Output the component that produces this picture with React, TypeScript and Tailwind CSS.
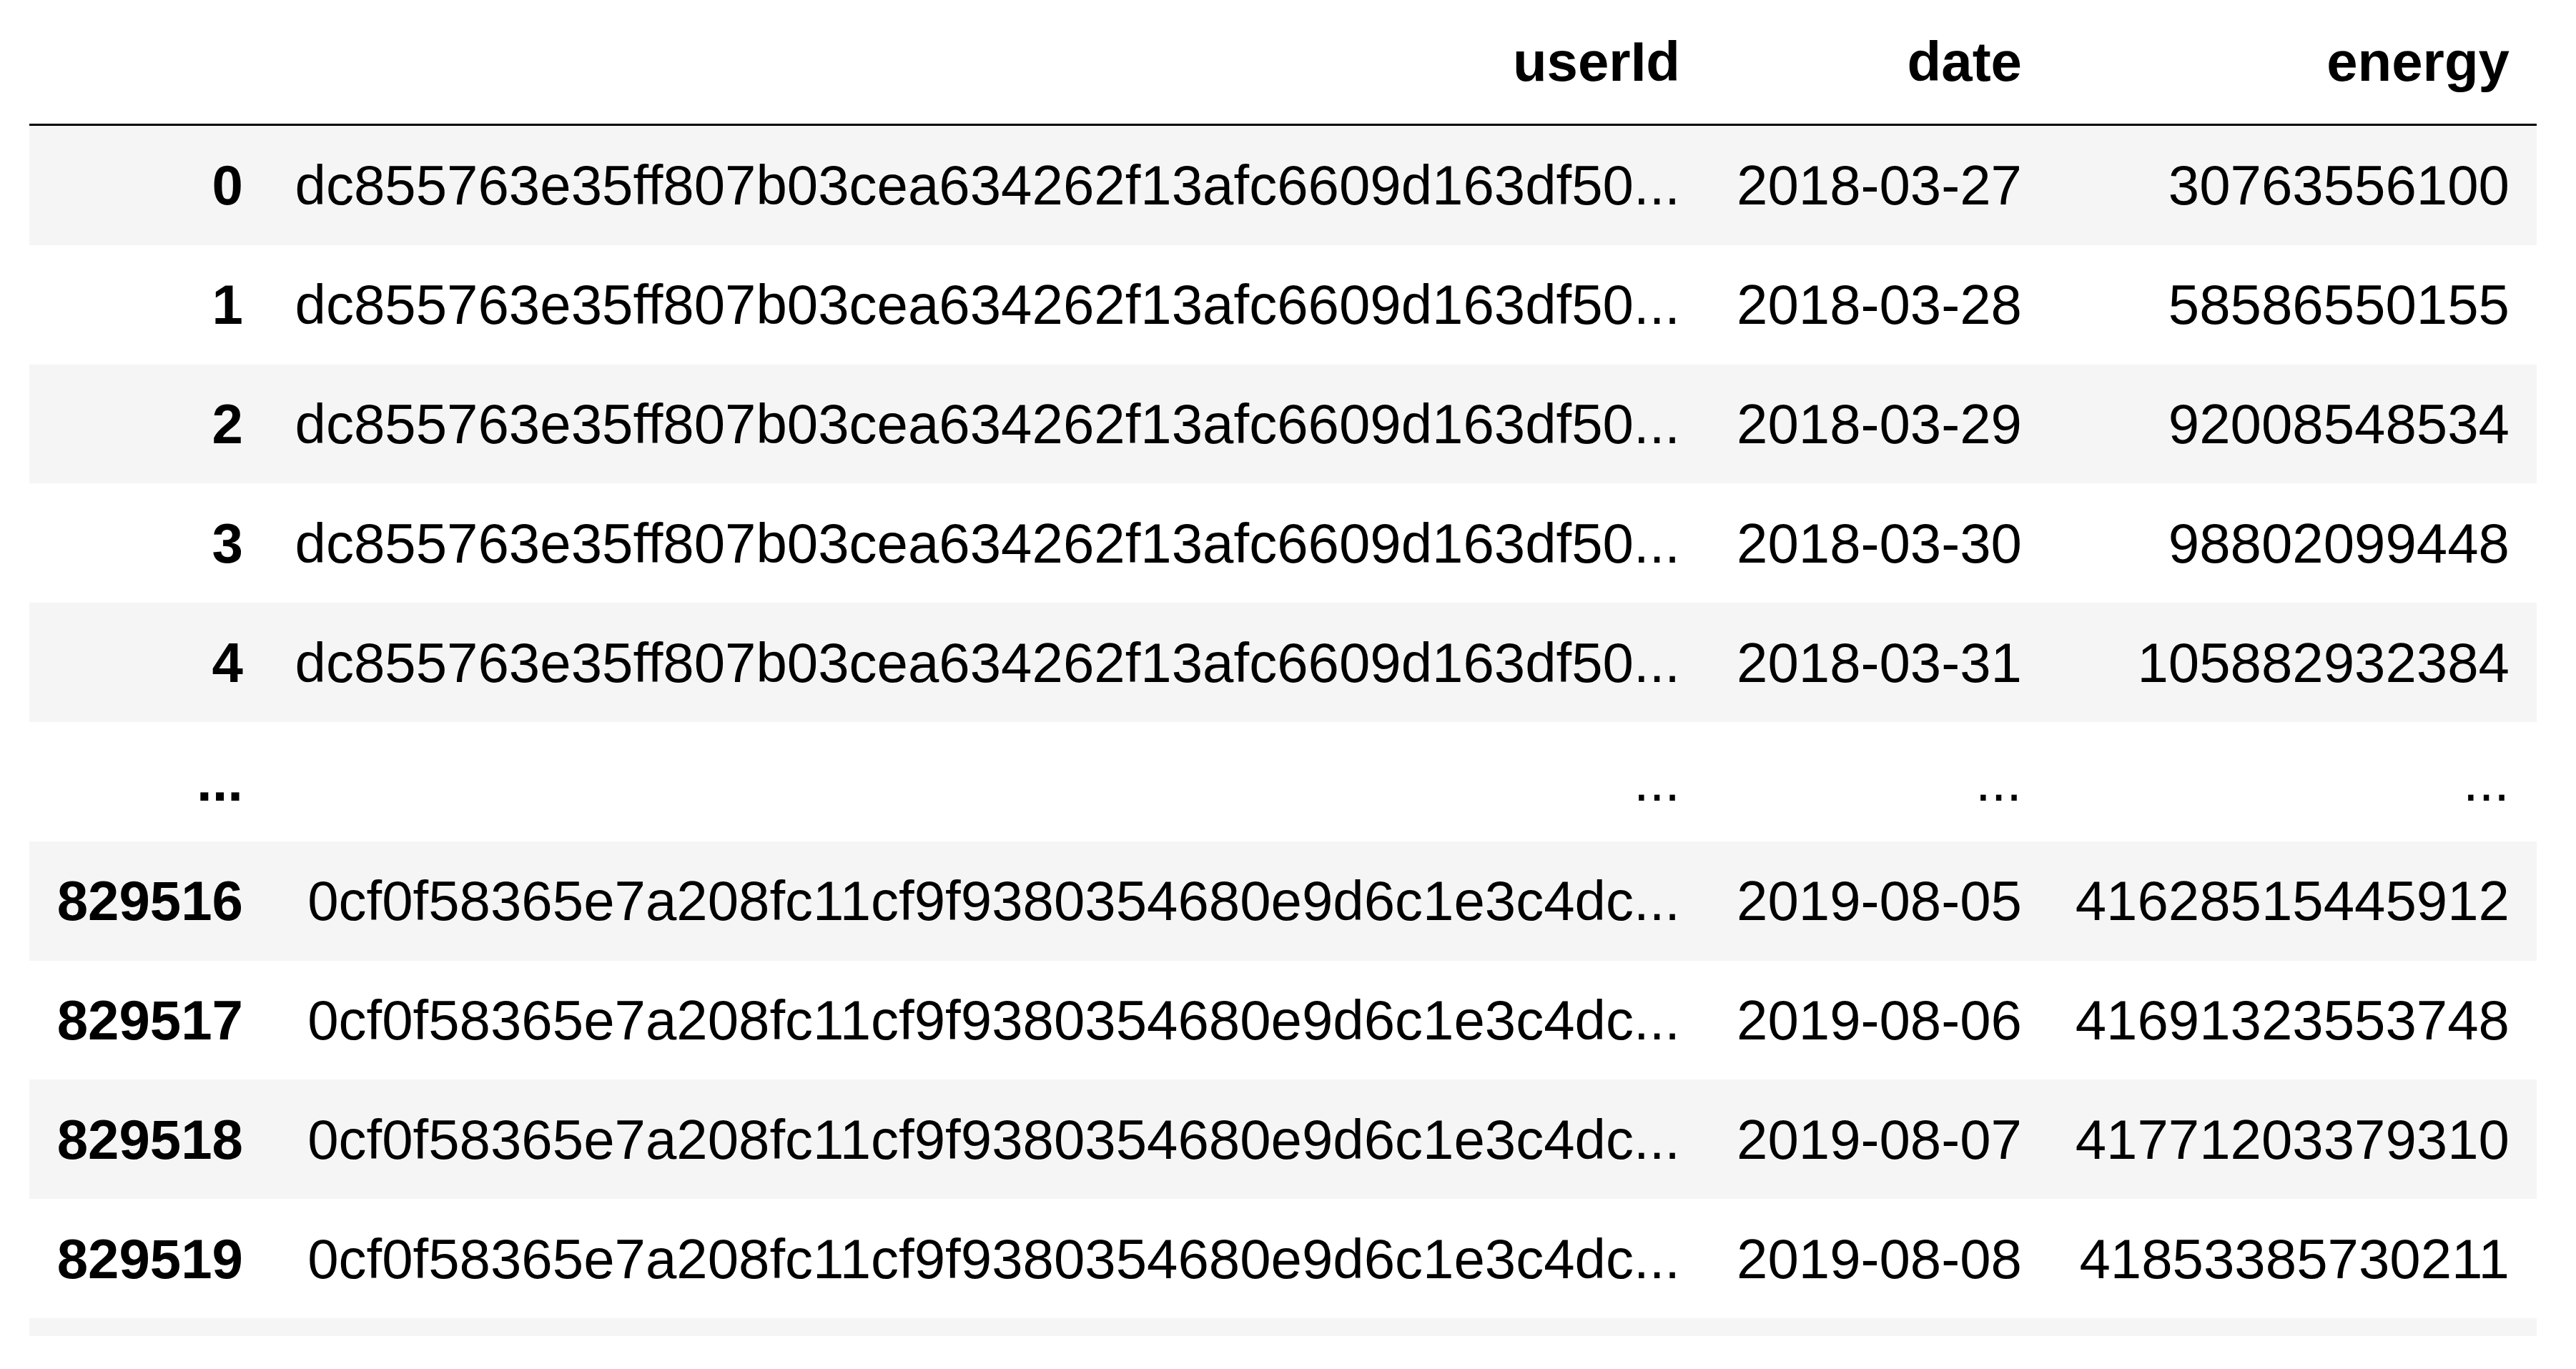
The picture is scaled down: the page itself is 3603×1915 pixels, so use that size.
import React from 'react'
import clsx from 'clsx'

type Row = { idx: string; userId: string; date: string; energy: string }

const HEAD_A = 'dc855763e35ff807b03cea634262f13afc6609d163df50...'
const HEAD_B = '0cf0f58365e7a208fc11cf9f9380354680e9d6c1e3c4dc...'

const rows: Row[] = [
  { idx: '0', userId: HEAD_A, date: '2018-03-27', energy: '30763556100' },
  { idx: '1', userId: HEAD_A, date: '2018-03-28', energy: '58586550155' },
  { idx: '2', userId: HEAD_A, date: '2018-03-29', energy: '92008548534' },
  { idx: '3', userId: HEAD_A, date: '2018-03-30', energy: '98802099448' },
  { idx: '4', userId: HEAD_A, date: '2018-03-31', energy: '105882932384' },
  { idx: '...', userId: '...', date: '...', energy: '...' },
  { idx: '829516', userId: HEAD_B, date: '2019-08-05', energy: '41628515445912' },
  { idx: '829517', userId: HEAD_B, date: '2019-08-06', energy: '41691323553748' },
  { idx: '829518', userId: HEAD_B, date: '2019-08-07', energy: '41771203379310' },
  { idx: '829519', userId: HEAD_B, date: '2019-08-08', energy: '41853385730211' },
]

// column widths taken from the rendered frame
const GRID = 'grid grid-cols-[337px_2010px_478px_682px]'

function DataRow({ row, striped }: { row: Row; striped: boolean }) {
  return (
    <div className={clsx(GRID, 'h-[166.8px] items-center', striped ? 'bg-[#f5f5f5]' : 'bg-white')}>
      <div className="text-right pr-[38px] font-bold">{row.idx}</div>
      <div className="text-right pr-[38px] whitespace-nowrap">{row.userId}</div>
      <div className="text-right pr-[38px]">{row.date}</div>
      <div className="text-right pr-[38px]">{row.energy}</div>
    </div>
  )
}

export default function App() {
  const cols = ['', 'userId', 'date', 'energy']

  return (
    <div className="w-[3603px] h-[1915px] overflow-hidden bg-white pl-[41px] pr-[55px] text-black text-[78px] leading-none font-['Liberation_Sans',Arial,sans-serif]">
      <div className={clsx(GRID, 'h-[176px] items-end pb-[48px] border-b-[3px] border-black')}>
        {cols.map((c, i) => (
          <div key={i} className="text-right pr-[38px] font-bold">{c}</div>
        ))}
      </div>
      {rows.map((r, i) => (
        <DataRow key={r.idx} row={r} striped={i % 2 === 0} />
      ))}
      {/* next row, cut off by the screenshot edge */}
      <div className="h-[25px] bg-[#f5f5f5]" />
    </div>
  )
}
